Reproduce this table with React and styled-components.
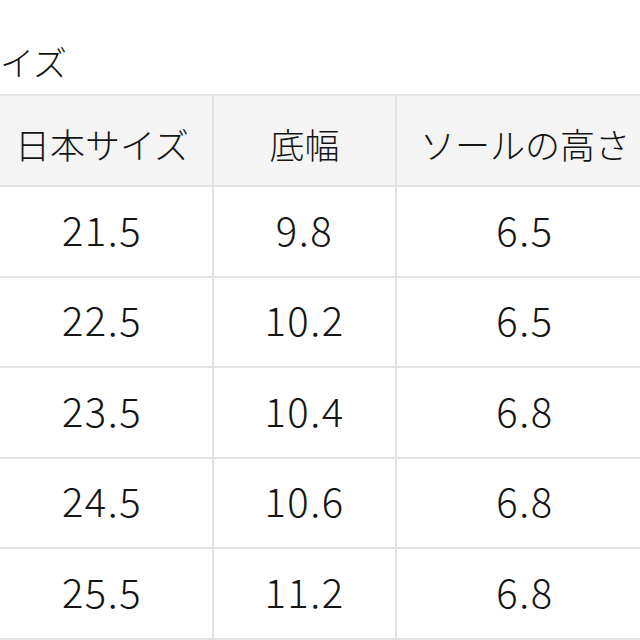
import React from 'react';
import styled, { createGlobalStyle } from 'styled-components';

const GlobalStyle = createGlobalStyle`
    html, body {
        margin: 0;
        padding: 0;
        background: #ffffff;
        overflow: hidden;
    }
    body {
        font-family: "Noto Sans CJK JP", "Noto Sans", sans-serif;
        color: #141414;
    }
`;

const Page = styled.div`
    width: 640px;
    height: 640px;
    overflow: hidden;
    padding-top: 41px;
    box-sizing: border-box;
`;

const Shift = styled.div`
    margin-left: -10px;
`;

const Title = styled.h2`
    margin: 0 0 0 10px;
    font-size: 34px;
    font-weight: 300;
    line-height: 42px;
`;

const Table = styled.table`
    margin-top: 11px;
    border-collapse: collapse;
    table-layout: fixed;
    width: 663px;
`;

const Cell = styled.td`
    border: 2px solid #e2e2e2;
    height: ${props => props.head ? '83px' : '83.5px'};
    padding: 0;
    text-align: center;
    vertical-align: middle;
    font-size: ${props => props.head ? '35px' : '40px'};
    font-weight: 300;
    background: ${props => props.head ? '#f4f4f4' : '#ffffff'};
    letter-spacing: ${props => props.head ? '0' : '1.5px'};
    padding-top: ${props => props.head ? '6px' : '0'};
    padding-bottom: ${props => props.head ? '0' : '5px'};
`;

const heads = ['日本サイズ', '底幅', 'ソールの高さ'];

const rows = [
    ['21.5', '9.8', '6.5'],
    ['22.5', '10.2', '6.5'],
    ['23.5', '10.4', '6.8'],
    ['24.5', '10.6', '6.8'],
    ['25.5', '11.2', '6.8'],
];

const App = () => {
    return (
        <Page>
            <GlobalStyle />
            <Shift>
                <Title>イズ</Title>
                <Table>
                    <colgroup>
                        <col style={{ width: 222 }} />
                        <col style={{ width: 183 }} />
                        <col style={{ width: 258 }} />
                    </colgroup>
                    <thead>
                        <tr>
                            {heads.map((h) => (
                                <Cell as="th" head key={h}>{h}</Cell>
                            ))}
                        </tr>
                    </thead>
                    <tbody>
                        {rows.map((r) => (
                            <tr key={r[0]}>
                                {r.map((v, i) => (
                                    <Cell key={i}>{v}</Cell>
                                ))}
                            </tr>
                        ))}
                    </tbody>
                </Table>
            </Shift>
        </Page>
    );
};

export default App;
